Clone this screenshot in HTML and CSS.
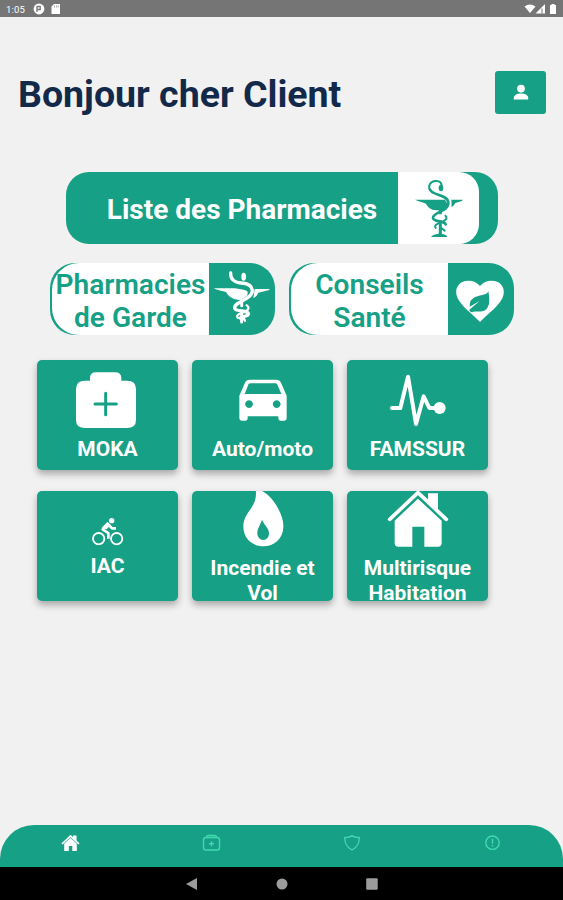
FILE: index.html
```html
<!DOCTYPE html>
<html lang="fr">
<head>
<meta charset="utf-8">
<title>Accueil</title>
<link rel="stylesheet" href="styles.css">
</head>
<body>
<div class="screen">
  <div class="status">
    <span class="clock">1:05</span>
    <svg class="st-left" width="32" height="14" viewBox="0 0 32 14"><circle cx="7" cy="7" r="5.400" fill="#fff"/><path d="M5 4v6M5 4.500h3.200v3H5" fill="none" stroke="#777" stroke-width="1.300"/><path d="M22 2h6v10h-8.500V4.500z" fill="#fff"/><path d="M22.500 3.500v2M24.500 3.500v2M26.300 3.500v2" stroke="#888" stroke-width=".7"/></svg>
    <svg class="st-right" width="35" height="14" viewBox="0 0 35 14" fill="#fff"><path d="M.5 4.500Q6 .5 11.500 4.500L6 11z"/><path d="M21 2v9.500H11.500z"/><path d="M18 6.500v5" stroke="#777" stroke-width="1"/><path d="M26 3h1.500V2h3v1H32v9h-6z"/></svg>
  </div>
  <header class="header">
    <h1>Bonjour cher Client</h1>
    <button class="profile" aria-label="Profil"><svg width="16" height="17" viewBox="0 0 16 17" fill="#fff"><circle cx="8" cy="4.600" r="3.900"/><path d="M.8 15.600v-1.800C.8 11 4.500 9.500 8 9.500s7.200 1.500 7.200 4.300v1.800z"/></svg></button>
  </header>

  <a class="pill main-pill">
    <span class="main-label">Liste des Pharmacies</span>
    <span class="main-icon">
      <svg width="50" height="62" viewBox="100 50 150 186" fill="none" stroke="#16a085" stroke-linecap="round"><path d="M103 118h90l9 16c-6 10-14 14-22 16h-14c-16-2-23-8-30-20-9-4-20-6-33-12zM212 118h34l-2 4-20 6c-4 7-7 10-11 12z" fill="#16a085" stroke="none"/><path d="M148 89c-7-13 1-26 17-27 13-1 20 7 17 17" stroke-width="6"/><ellipse cx="181" cy="83" rx="7" ry="10" fill="#16a085" stroke="none"/><path d="M148 88c6 18 52 13 55 38 2 28-46 29-46 46 0 14 35 8 38 20" stroke-width="8"/><path d="M179 148v14M179 180v42" stroke-width="9" stroke-linecap="butt"/><path d="M194 166c10 10-4 17-16 21-12 5-18 8-13 16M180 202l12 9" stroke-width="6"/><path d="M151 230c5-8 18-7 27-12 9 5 20 4 22 12z" fill="#16a085" stroke="none"/></svg>
    </span>
  </a>

  <div class="pair">
    <a class="pill small-pill">
      <span class="small-label">Pharmacies<br>de Garde</span>
      <span class="small-icon">
        <svg width="58" height="60" viewBox="515 45 174 180" fill="none" stroke="#fff" stroke-linecap="round"><path d="M517 103h104l-4 28c-7 5-13 7-20 7-24-1-34-10-43-24-10-3-27-5-37-11zM640 105h44v3l-33 8c-3 8-8 12-15 16z" fill="#fff" stroke="none"/><path d="M577 92c20 10 50 2 52 26 1 20-47 28-47 46" stroke="#16a085" stroke-width="16"/><path d="M568 57c-2 18 12 29 31 30 20 1 33 7 34 22 1 27-53 33-53 52 0 14 41 6 41 19 0 8-18 6-24 12" stroke-width="10"/><ellipse cx="607" cy="68" rx="7" ry="12" fill="#fff" stroke="none"/><path d="M601 140v15M601 177v27" stroke-width="9"/><path d="M616 154c14 10-2 19-15 23-14 4-16 10-11 15M607 193l4 7" stroke-width="7"/></svg>
      </span>
    </a>
    <a class="pill small-pill">
      <span class="small-label">Conseils<br>Santé</span>
      <span class="small-icon">
        <svg class="heart" width="50" height="44" viewBox="524 72 150 132"><path d="M599 201c-19-20-45-39-60-60-18-24-14-49 7-60 18-8 40-4 53 12 13-16 35-20 53-12 21 11 25 36 7 60-15 21-41 40-60 60z" fill="#fff"/><path d="M624 108c-3 17-46 8-55 35l-1 12 30-17-32 27 6 7c18-7 40 5 51-17 7-14 3-32 1-47z" fill="#16a085"/></svg>
      </span>
    </a>
  </div>

  <main class="grid">
    <a class="card"><svg width="64" height="70" viewBox="137 51 192 210"><path d="M179 92V84q0-17 18-17h57q19 0 19 17v8h17q27 0 27 25v93q0 24-27 24H164q-27 0-27-24v-93q0-25 27-25z" fill="#fff"/><path d="M226 130v64M194 162h64" stroke="#16a085" stroke-width="9" stroke-linecap="round"/></svg><span>MOKA</span></a>
    <a class="card"><svg width="54" height="70" viewBox="153 51 162 210"><path fill="#fff" fill-rule="evenodd" d="M163 137l17-39q4-9 14-9h80q10 0 14 9l17 39v68q0 7-7 7h-12q-6 0-6-7v-6h-92v6q0 7-6 7h-12q-7 0-7-7zM179 132h110l-13-31q-2-1-5-1h-74q-4 0-6 1zM192 151a11.500 11.500 0 1 0 .1 0zM275 151a11.500 11.500 0 1 0 .1 0z"/></svg><span>Auto/moto</span></a>
    <a class="card"><svg width="62" height="70" viewBox="605 51 186 210"><path d="M620 174h25l23-94 24 142 23-83 17 35h30" fill="none" stroke="#fff" stroke-width="12" stroke-linecap="round" stroke-linejoin="round"/><circle cx="763" cy="174" r="18" fill="#fff"/></svg><span>FAMSSUR</span></a>
    <a class="card"><svg width="34" height="41" viewBox="182 92 102 123" fill="none" stroke="#fff"><circle cx="205" cy="169" r="17" stroke-width="5.500"/><circle cx="259" cy="169" r="17" stroke-width="5.500"/><circle cx="244" cy="115" r="8" fill="#fff" stroke="none"/><path d="M234 169v-17l-17-11 16-16 12 13h12" stroke-width="8" stroke-linejoin="round"/><path d="M214 136l17-17 9 9-11 13z" fill="#fff" stroke="none"/></svg><span>IAC</span></a>
    <a class="card"><svg width="46" height="70" viewBox="164 12 138 210"><path fill="#fff" fill-rule="evenodd" d="M211 22c26 2 49 24 66 55 12 21 18 42 17 58-1 35-27 58-60 58s-60-23-60-60c0-45 45-55 37-111zM230 113c-6 18-14 26-14 41 0 12 8 20 18 20s17-8 17-20c0-17-14-23-21-41z"/></svg><span>Incendie et<br>Vol</span></a>
    <a class="card"><svg width="62" height="70" viewBox="605 12 186 210"><path d="M613 112l85-80 85 80" fill="none" stroke="#fff" stroke-width="11" stroke-linecap="round" stroke-linejoin="round"/><path d="M728 62V34h30v58z" fill="#fff"/><path d="M628 116l70-66 71 66v67q0 11-11 11h-41v-60h-36v60h-42q-11 0-11-11z" fill="#fff"/></svg><span>Multirisque<br>Habitation</span></a>
  </main>

  <nav class="tabs">
    <a><svg width="20" height="20" viewBox="0 0 20 20"><path d="M2.500 10.500L10.500 3l8 7.500" fill="none" stroke="#fff" stroke-width="1.700" stroke-linecap="round"/><path d="M13 2.500h3.500v6L13 6zM4.200 10.700l6.300-5.900 6.300 5.900V18h-4.500v-5H8.800v5H4.200z" fill="#fff"/></svg></a>
    <a><svg width="20" height="20" viewBox="0 0 20 20" fill="none" stroke="#40d9b0" stroke-width="1.400"><rect x="2.500" y="4.500" width="16" height="12.500" rx="2.500"/><path d="M5.500 4.500q0-2 2-2h6q2 0 2 2M10.500 8.200v5M8 10.700h5"/></svg></a>
    <a><svg width="20" height="20" viewBox="0 0 20 20" fill="none" stroke="#40d9b0" stroke-width="1.400"><path d="M10 2.500C8.500 4 5 4.500 2.800 4.500c0 6 1.500 9.500 7.200 12.500 5.700-3 7.200-6.500 7.200-12.500C15 4.500 11.500 4 10 2.500z" stroke-linejoin="round"/></svg></a>
    <a><svg width="20" height="20" viewBox="0 0 20 20" fill="none" stroke="#40d9b0" stroke-width="1.400"><circle cx="9.500" cy="9.700" r="6.700"/><path d="M9.500 5.800v5M9.500 12v1.600"/></svg></a>
  </nav>
  <div class="sysbar">
    <svg width="14" height="14" viewBox="0 0 14 14"><path d="M1 7l11-6v12z" fill="#9c9c9c"/></svg>
    <svg width="14" height="14" viewBox="0 0 14 14"><circle cx="7" cy="7" r="5.500" fill="#9c9c9c"/></svg>
    <svg width="14" height="14" viewBox="0 0 14 14"><rect x="1.200" y="1.200" width="11.500" height="11.500" rx="1" fill="#9c9c9c"/></svg>
  </div>
</div>
</body>
</html>
```
FILE: styles.css
```css
* { box-sizing: border-box; }
body { margin: 0; font-family: Roboto, sans-serif; background: #f1f1f1; }
svg { display: block; flex: none; }
.screen { width: 563px; height: 900px; display: flex; flex-direction: column; overflow: hidden; background: #f1f1f1; }
.status { height: 17px; flex: none; background: #757575; color: #fff; display: flex; align-items: center; padding: 1px 4px 0 6px; }
.clock { font-size: 9.500px; width: 26px; letter-spacing: .2px; }
.st-right { margin-left: auto; }
.header { height: 44px; margin: 53px 17px 0 18px; display: flex; align-items: center; justify-content: space-between; flex: none; }
h1 { margin: 3px 0 0; font-size: 37.500px; line-height: 44px; font-weight: 700; color: #13294a; white-space: nowrap; }
.profile { width: 51px; height: 43px; border: 0; border-radius: 3px; background: #16a085; display: flex; align-items: center; justify-content: center; padding: 0; }
.pill { display: flex; background: #16a085; overflow: hidden; flex: none; font-weight: 600; }
.main-pill { width: 432px; height: 72px; margin: 58px 0 0 66px; border-radius: 23px; }
.main-label { width: 332px; padding-left: 20px; text-align: center; color: #fff; font-size: 28px; font-weight: 700; line-height: 75px; white-space: nowrap; }
.main-icon { width: 81px; background: #fff; border-radius: 0 20px 20px 0; display: flex; align-items: center; justify-content: center; }
.pair { display: flex; gap: 14px; margin: 19px 0 0 50px; }
.small-pill { width: 225px; height: 72px; border-radius: 25px; }
.small-label { width: 157px; margin-left: 2px; padding-top: 5px; border-radius: 27px 0 0 27px; background: #fff; color: #16a085; text-align: center; font-size: 28.100px; line-height: 33px; white-space: nowrap; }
.small-icon { flex: 1; display: flex; align-items: center; justify-content: center; }
.heart { margin-top: 3px; margin-right: 3px; }
.grid { display: grid; grid-template-columns: repeat(3, 141px); grid-auto-rows: 110px; gap: 21px 14px; margin: 24.500px 0 0 37px; }
.card { background: #16a085; border-radius: 5px; box-shadow: 0 4px 7px rgba(0,0,0,.3); overflow: hidden; display: flex; flex-direction: column; align-items: center; justify-content: center; color: #fff; font-size: 21px; line-height: 25px; font-weight: 700; text-align: center; white-space: nowrap; }
.tabs { margin-top: auto; height: 42px; flex: none; display: grid; grid-template-columns: repeat(4, 1fr); justify-items: center; padding-top: 8px; background: #16a085; border-radius: 34px 34px 0 0; }
.sysbar { height: 33px; flex: none; background: #000; display: flex; justify-content: center; align-items: center; gap: 76px; }
```
